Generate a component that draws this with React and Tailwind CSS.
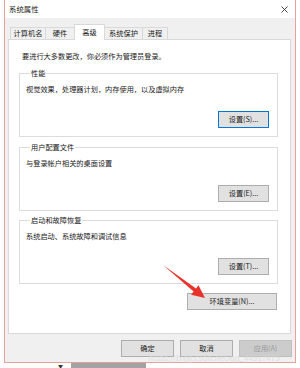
const font = { fontFamily: '"Noto Sans CJK SC", "Liberation Sans", sans-serif' };

const Button = ({ label, focused, disabled, className = "" }) => (
  <div
    className={`h-[17px] flex items-center justify-center text-[7.2px] leading-none border ${
      disabled
        ? "bg-[#cccccc] border-[#bfbfbf] text-[#9a9a9a]"
        : focused
        ? "bg-[#e1e1e1] border-[#0078d7] text-[#1a1a1a]"
        : "bg-[#e1e1e1] border-[#adadad] text-[#1a1a1a]"
    } ${className}`}
  >
    {label}
  </div>
);

const Group = ({ title, text, button, focused }) => (
  <fieldset className="border border-[#dcdcdc] pl-[6px] pr-[8px] pt-[7px] pb-[8px] flex flex-col">
    <legend className="ml-[4px] px-[1px] text-[7.2px] leading-[9px] text-[#1a1a1a]">
      {title}
    </legend>
    <div className="text-[7.2px] leading-[9px] text-[#1a1a1a]">{text}</div>
    <Button label={button} focused={focused} className="w-[51px] self-end mt-[17px]" />
  </fieldset>
);

const tabs = [
  { name: "计算机名", w: "w-[36px]" },
  { name: "硬件", w: "w-[29px]" },
  { name: "高级", w: "w-[31px]", active: true },
  { name: "系统保护", w: "w-[38px]" },
  { name: "进程", w: "w-[25px]" },
];

export default function App() {
  return (
    <div className="relative w-[300px] h-[368px] bg-white overflow-hidden" style={font}>
      <div className="ml-[4px] w-[292px] h-[363px] border-x border-b border-[#e8a09c] bg-[#f0f0f0] flex flex-col">
        {/* title bar */}
        <div className="h-[18px] bg-white flex items-center justify-between pl-[4px] pr-[6px]">
          <span className="text-[7.4px] leading-none text-[#222]">系统属性</span>
          <svg width="7" height="7" viewBox="0 0 7 7" className="mr-[1px]">
            <path d="M0.5 0.5L6.5 6.5M6.5 0.5L0.5 6.5" stroke="#333" strokeWidth="0.9" />
          </svg>
        </div>

        {/* tabs */}
        <div className="h-[21px] flex items-end pl-[5px] relative z-10">
          {tabs.map((t, i) =>
            t.active ? (
              <div
                key={t.name}
                className={`${t.w} h-[16px] -mb-px -ml-px bg-white border-x border-t border-[#d9d9d9] flex items-center justify-center text-[7.2px] leading-none text-[#1a1a1a]`}
              >
                {t.name}
              </div>
            ) : (
              <div
                key={t.name}
                className={`${t.w} h-[12px] ${i === 0 ? "border-l" : ""} border-t border-r border-[#d9d9d9] flex items-center justify-center text-[7.2px] leading-none text-[#1a1a1a] pt-[1px]`}
              >
                {t.name}
              </div>
            )
          )}
        </div>

        {/* tab page */}
        <div className="ml-[3px] w-[283px] h-[295px] bg-white border border-[#d9d9d9] pt-[12px] pl-[10px] pr-[12px] flex flex-col">
          <div className="ml-[3px] text-[7.2px] leading-[9px] text-[#1a1a1a]">
            要进行大多数更改，你必须作为管理员登录。
          </div>
          <div className="mt-[8px]">
            <Group
              title="性能"
              text="视觉效果，处理器计划，内存使用，以及虚拟内存"
              button="设置(S)..."
              focused
            />
          </div>
          <div className="mt-[6px]">
            <Group title="用户配置文件" text="与登录帐户相关的桌面设置" button="设置(E)..." />
          </div>
          <div className="mt-[5px]">
            <Group title="启动和故障恢复" text="系统启动、系统故障和调试信息" button="设置(T)..." />
          </div>
          <Button label="环境变量(N)..." className="w-[90px] self-end mr-[1px] mt-[9px]" />
        </div>

        {/* dialog buttons */}
        <div className="flex justify-end gap-[6px] pr-[3px] mt-[6px]">
          <Button label="确定" className="w-[53px]" />
          <Button label="取消" className="w-[53px]" />
          <Button label="应用(A)" disabled className="w-[53px]" />
        </div>
      </div>

      {/* strip below the window */}
      <div className="h-[5px] flex items-start">
        <span className="ml-[58px] text-[5px] leading-[5px] text-[#333]">▼</span>
        <div className="ml-[8px] w-[75px] h-[5px] bg-[#a3a3a3]" />
      </div>

      {/* watermark */}
      <div className="absolute left-[148px] top-[354px] text-[8px] leading-none text-[#d8d8d8] opacity-70 pointer-events-none">
        https://blog.csdn.net/qq_44917475
      </div>

      {/* red arrow */}
      <svg
        className="absolute left-0 top-0 pointer-events-none"
        width="300"
        height="368"
        viewBox="0 0 300 368"
      >
        <polygon
          points="163,265 196,288.4 198.5,285.3 205,298 191.1,294.7 193.6,291.6"
          fill="#e8322b"
        />
      </svg>
    </div>
  );
}
